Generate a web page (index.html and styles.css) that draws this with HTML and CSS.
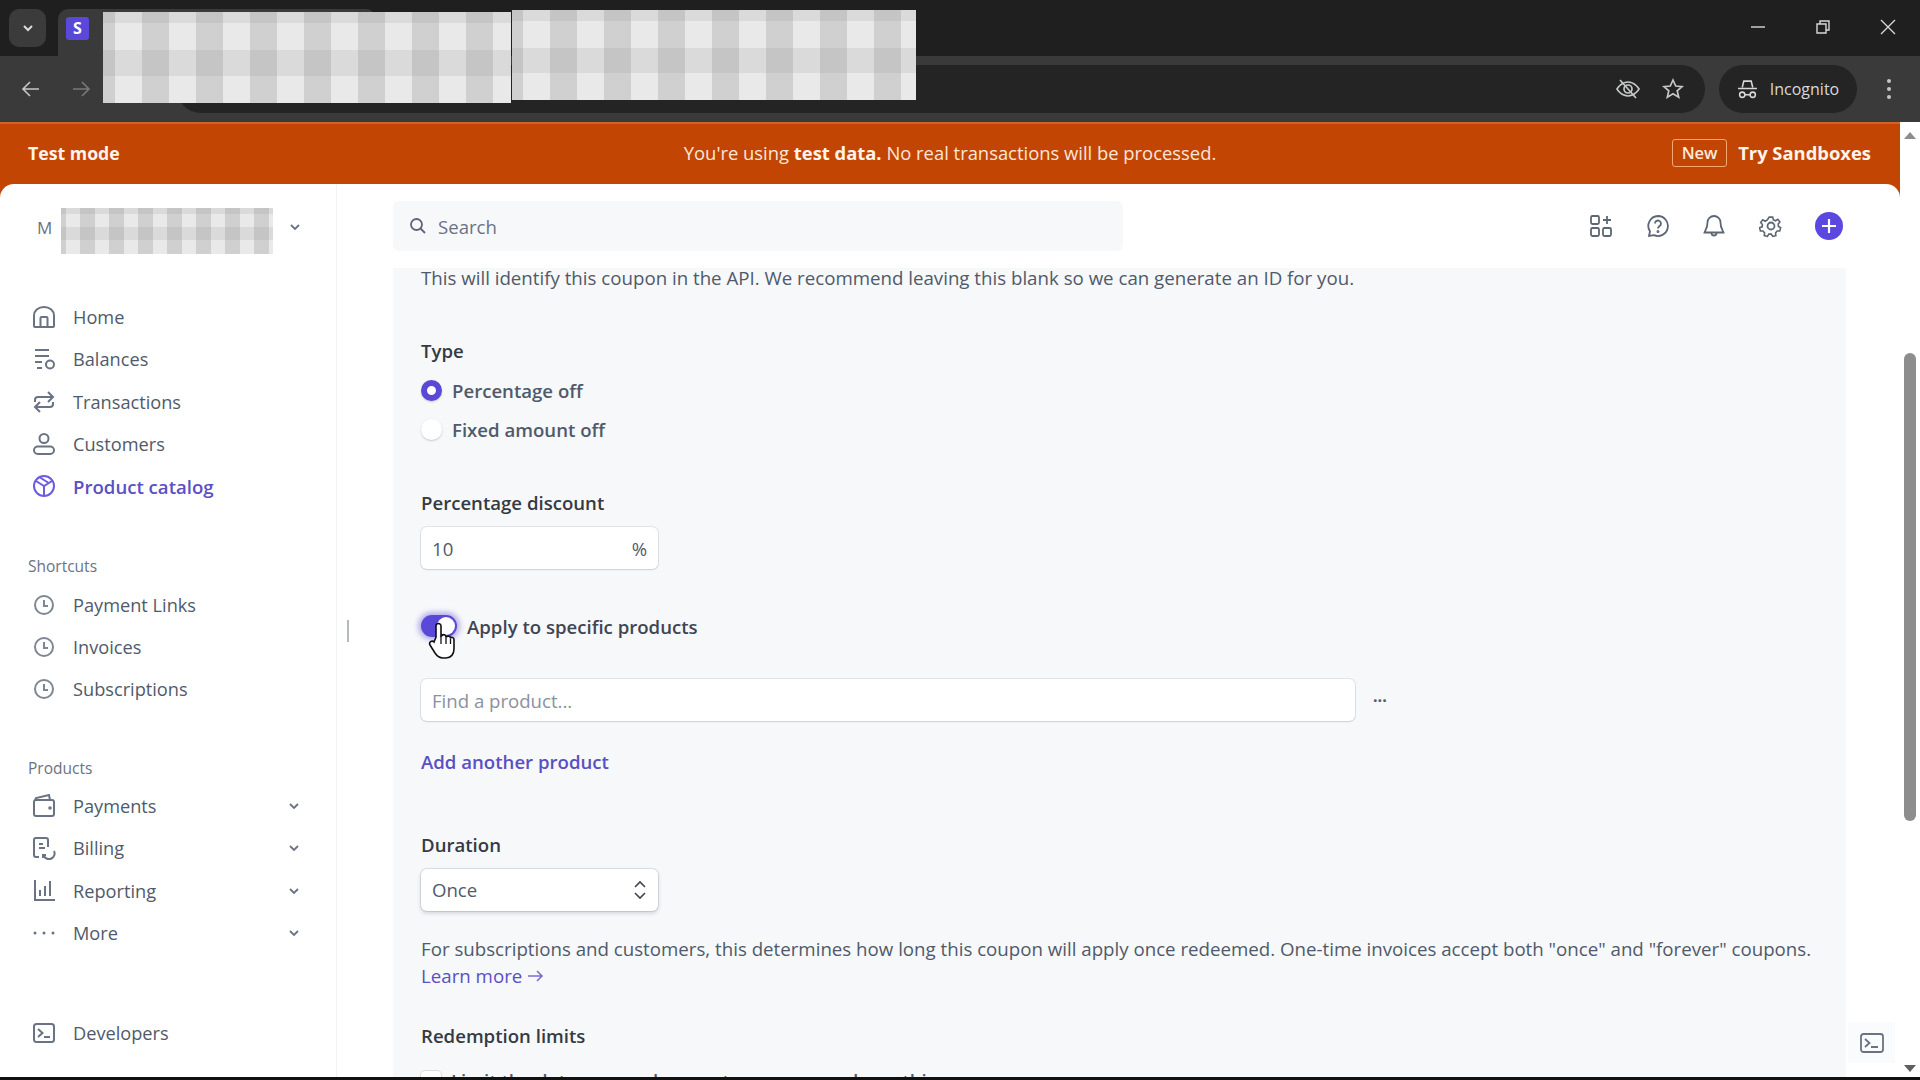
FILE: index.html
```html
<!DOCTYPE html>
<html lang="en">
<head>
    <meta charset="UTF-8">
    <meta name="viewport" content="width=device-width, initial-scale=1.0">
    <title>Create a coupon</title>
    <link rel="stylesheet" href="styles.css">
</head>
<body>

<div class="window">
    <!-- Browser chrome -->
    <div class="tabstrip">
        <div class="tab-search">
            <svg width="14" height="14" viewBox="0 0 14 14" fill="none" stroke="#dcdcdc" stroke-width="2"><path d="M3 5l4 4 4-4"/></svg>
        </div>
        <div class="tab">
            <span class="favicon">S</span>
        </div>
        <div class="window-buttons">
            <svg width="16" height="16" viewBox="0 0 16 16" fill="none" stroke="#d8d8d8" stroke-width="1.4"><path d="M1 8h14"/></svg>
            <svg width="16" height="16" viewBox="0 0 16 16" fill="none" stroke="#d8d8d8" stroke-width="1.4"><path d="M2 5h9v9H2zM5 5V2h9v9h-3"/></svg>
            <svg width="16" height="16" viewBox="0 0 16 16" fill="none" stroke="#d8d8d8" stroke-width="1.4"><path d="M1 1l14 14M15 1L1 15"/></svg>
        </div>
    </div>
    <div class="toolbar">
        <svg class="nav-arrow" width="20" height="20" viewBox="0 0 20 20" fill="none" stroke="#c4c7c5" stroke-width="1.6"><path d="M18 10H3M9 3l-7 7 7 7"/></svg>
        <svg class="nav-arrow" width="20" height="20" viewBox="0 0 20 20" fill="none" stroke="#77797a" stroke-width="1.6"><path d="M2 10h15M11 3l7 7-7 7"/></svg>
        <div class="omnibox">
            <svg width="26" height="26" viewBox="0 0 26 26" fill="none" stroke="#c4c7c5" stroke-width="1.7"><path d="M2 13s4-7 11-7 11 7 11 7-4 7-11 7S2 13 2 13z"/><circle cx="13" cy="13" r="4"/><path d="M5 4l16 18"/></svg>
            <svg width="24" height="24" viewBox="0 0 24 24" fill="none" stroke="#c4c7c5" stroke-width="1.7"><path d="M12 3l2.7 6 6.3.6-4.8 4.2 1.5 6.4L12 16.8l-5.7 3.4 1.5-6.4L3 9.6 9.3 9z"/></svg>
        </div>
        <div class="incognito">
            <svg width="21" height="21" viewBox="0 0 20 20" fill="none" stroke="#d8d8d8" stroke-width="1.5"><path d="M5 8l1.5-6h7L15 8M1 9h18"/><circle cx="5" cy="15" r="2.5"/><circle cx="15" cy="15" r="2.5"/><path d="M7.5 15h5"/></svg>
            <span>Incognito</span>
        </div>
        <svg class="kebab" width="6" height="22" viewBox="0 0 6 22" fill="#c4c7c5"><circle cx="3" cy="3" r="2"/><circle cx="3" cy="11" r="2"/><circle cx="3" cy="19" r="2"/></svg>
    </div>

    <div class="page">
        <div class="page-main">
            <!-- Test mode banner -->
            <div class="banner">
                <strong class="banner-left">Test mode</strong>
                <div class="banner-center">You're using <strong>test data.</strong> No real transactions will be processed.</div>
                <div class="banner-right"><span class="new-badge">New</span><strong>Try Sandboxes</strong></div>
            </div>

            <div class="app">
                <aside class="sidebar">
                    <div class="account">
                        <span class="account-letter">M</span>
                        <span class="checker account-name"></span>
                        <svg class="chevron" width="12" height="12" viewBox="0 0 12 12" fill="none" stroke="#6a7383" stroke-width="1.8"><path d="M2 4l4 4 4-4"/></svg>
                    </div>

                    <nav class="nav-group nav-main">
                        <a class="nav-item">
                            <svg class="nav-icon" viewBox="0 0 24 24"><path d="M2 21V10.5C2 6 6 2 12 2s10 4 10 8.5V21a1 1 0 0 1-1 1H3a1 1 0 0 1-1-1z"/><path d="M8.5 22v-9a1 1 0 0 1 1-1h5a1 1 0 0 1 1 1v9"/></svg>
                            Home
                        </a>
                        <a class="nav-item">
                            <svg class="nav-icon" viewBox="0 0 24 24"><path d="M3 3h14M3 9h14M3 15h7M5 21h5"/><circle cx="18" cy="17.5" r="4"/></svg>
                            Balances
                        </a>
                        <a class="nav-item">
                            <svg class="nav-icon" viewBox="0 0 24 24"><path d="M3 12V10a3 3 0 0 1 3-3h15M16 2l5 5-5 5M21 12v2a3 3 0 0 1-3 3H3M8 12l-5 5 5 5"/></svg>
                            Transactions
                        </a>
                        <a class="nav-item">
                            <svg class="nav-icon" viewBox="0 0 24 24"><circle cx="12" cy="6.5" r="4.5"/><rect x="2" y="14.5" width="20" height="7.5" rx="3.7"/></svg>
                            Customers
                        </a>
                        <a class="nav-item active">
                            <svg class="nav-icon" viewBox="0 0 24 24"><circle cx="12" cy="12" r="10"/><path d="M4 7l8 5 8-5M12 12v10M8 3.500l8 5"/></svg>
                            Product catalog
                        </a>
                    </nav>

                    <div class="nav-group nav-shortcuts">
                        <div class="nav-title">Shortcuts</div>
                        <a class="nav-item">
                            <svg class="nav-icon clock" viewBox="0 0 24 24"><circle cx="12" cy="12" r="9"/><path d="M12 7v6h4"/></svg>
                            Payment Links
                        </a>
                        <a class="nav-item">
                            <svg class="nav-icon clock" viewBox="0 0 24 24"><circle cx="12" cy="12" r="9"/><path d="M12 7v6h4"/></svg>
                            Invoices
                        </a>
                        <a class="nav-item">
                            <svg class="nav-icon clock" viewBox="0 0 24 24"><circle cx="12" cy="12" r="9"/><path d="M12 7v6h4"/></svg>
                            Subscriptions
                        </a>
                    </div>

                    <div class="nav-group nav-products">
                        <div class="nav-title">Products</div>
                        <a class="nav-item">
                            <svg class="nav-icon" viewBox="0 0 24 24"><rect x="2" y="6" width="20" height="16" rx="2"/><path d="M3 6l1-2 13-3 1 5"/><circle cx="18" cy="14" r=".8"/></svg>
                            Payments
                            <svg class="chevron" width="12" height="12" viewBox="0 0 12 12" fill="none" stroke="#6a7383" stroke-width="1.8"><path d="M2 4l4 4 4-4"/></svg>
                        </a>
                        <a class="nav-item">
                            <svg class="nav-icon" viewBox="0 0 24 24"><path d="M7 21H4a2 2 0 0 1-2-2V4a2 2 0 0 1 2-2h10a2 2 0 0 1 2 2v7"/><path d="M7 8h4M7 12h6"/><path d="M22 15a5.5 5.5 0 0 1-10 5M11 22v-3h3"/></svg>
                            Billing
                            <svg class="chevron" width="12" height="12" viewBox="0 0 12 12" fill="none" stroke="#6a7383" stroke-width="1.8"><path d="M2 4l4 4 4-4"/></svg>
                        </a>
                        <a class="nav-item">
                            <svg class="nav-icon" viewBox="0 0 24 24"><path d="M3 1v20h20M8 11v6M13 7v10M18 2v15"/></svg>
                            Reporting
                            <svg class="chevron" width="12" height="12" viewBox="0 0 12 12" fill="none" stroke="#6a7383" stroke-width="1.8"><path d="M2 4l4 4 4-4"/></svg>
                        </a>
                        <a class="nav-item">
                            <svg class="nav-icon dots" viewBox="0 0 24 24"><circle cx="3" cy="12" r="1.5"/><circle cx="12" cy="12" r="1.5"/><circle cx="21" cy="12" r="1.5"/></svg>
                            More
                            <svg class="chevron" width="12" height="12" viewBox="0 0 12 12" fill="none" stroke="#6a7383" stroke-width="1.8"><path d="M2 4l4 4 4-4"/></svg>
                        </a>
                    </div>

                    <a class="nav-item nav-dev">
                        <svg class="nav-icon" viewBox="0 0 24 24"><rect x="2" y="3" width="20" height="18" rx="2.5"/><path d="M6 8l4.5 4L6 16M12 16h6"/></svg>
                        Developers
                    </a>

                    <div class="resize-handle"></div>
                </aside>

                <main class="main">
                    <header class="topbar">
                        <div class="search">
                            <svg width="18" height="18" viewBox="0 0 18 18" fill="none" stroke="#5c6675" stroke-width="1.8"><circle cx="7.5" cy="7.5" r="5.5"/><path d="M11.5 11.5L16 16"/></svg>
                            <span>Search</span>
                        </div>
                        <div class="top-icons">
                            <svg width="24" height="24" viewBox="0 0 24 24" fill="none" stroke="#5c6675" stroke-width="1.8"><rect x="2" y="2" width="8" height="8" rx="1.5"/><rect x="2" y="14" width="8" height="8" rx="1.5"/><rect x="14" y="14" width="8" height="8" rx="1.5"/><path d="M18 2v8M14 6h8"/></svg>
                            <svg width="24" height="24" viewBox="0 0 24 24" fill="none" stroke="#5c6675" stroke-width="1.8"><path d="M12 2a10 10 0 1 1-4 19.2L3 22l1-4.5A10 10 0 0 1 12 2z"/><path d="M9 9.5a3 3 0 1 1 4.5 2.6c-1 .6-1.5 1.2-1.5 2.400"/><circle cx="12" cy="17.5" r=".6"/></svg>
                            <svg width="24" height="24" viewBox="0 0 24 24" fill="none" stroke="#5c6675" stroke-width="1.8"><path d="M12 2a6.5 6.5 0 0 0-6.5 6.5c0 6-2.5 8-3 10h19c-.5-2-3-4-3-10A6.5 6.5 0 0 0 12 2z"/><path d="M9.5 19a2.5 2.5 0 0 0 5 0"/></svg>
                            <svg width="24" height="24" viewBox="0 0 24 24" fill="none" stroke="#5c6675" stroke-width="1.8"><circle cx="12" cy="12" r="3.5"/><path d="M10 2h4l.6 3 2.5 1.1 2.7-1.6 2.4 3-2 2.3.3 2.7 2.5 1.5-1 3.7-3 .1-1.800 2.100.4 3-3.600 1-1.600-2.600h-2.800l-1.600 2.600-3.600-1 .4-3-1.800-2.100-3-.1-1-3.700L2 13l.3-2.700-2-2.300 2.400-3 2.700 1.600L7.900 5z" transform="translate(1.4 1.4) scale(.88)"/></svg>
                            <span class="plus-button">
                                <svg width="16" height="16" viewBox="0 0 16 16" fill="none" stroke="#fff" stroke-width="2.2"><path d="M8 1v14M1 8h14"/></svg>
                            </span>
                        </div>
                    </header>

                    <div class="scroll-area">
                        <div class="form-panel">
                            <p class="hint hint-id">This will identify this coupon in the API. We recommend leaving this blank so we can generate an ID for you.</p>

                            <div class="field field-type">
                                <div class="label">Type</div>
                                <div class="radio-row"><span class="radio checked"></span>Percentage off</div>
                                <div class="radio-row"><span class="radio"></span>Fixed amount off</div>
                            </div>

                            <div class="field field-percent">
                                <div class="label">Percentage discount</div>
                                <div class="input small-input"><span>10</span><span class="suffix">%</span></div>
                            </div>

                            <div class="toggle-row">
                                <span class="toggle"><span class="toggle-knob"></span></span>
                                Apply to specific products
                            </div>

                            <div class="product-row">
                                <div class="input wide-input placeholder">Find a product...</div>
                                <span class="more-dots">···</span>
                            </div>

                            <a class="link add-link">Add another product</a>

                            <div class="field field-duration">
                                <div class="label">Duration</div>
                                <div class="input small-input select">
                                    <span>Once</span>
                                    <svg width="14" height="20" viewBox="0 0 14 20" fill="none" stroke="#414552" stroke-width="1.6"><path d="M2 7l5-5 5 5M2 13l5 5 5-5"/></svg>
                                </div>
                            </div>

                            <p class="hint hint-duration">For subscriptions and customers, this determines how long this coupon will apply once redeemed. One-time invoices accept both "once" and "forever" coupons.<br>
                                <a class="link learn-link">Learn more
                                    <svg width="17" height="14" viewBox="0 0 17 14" fill="none" stroke="#7a6fd0" stroke-width="1.6"><path d="M1 7h14M10 2l5 5-5 5"/></svg>
                                </a>
                            </p>

                            <div class="label label-limits">Redemption limits</div>
                            <div class="check-row"><span class="checkbox"></span>Limit the date range when customers can redeem this coupon</div>
                        </div>
                        <div class="console-button">
                            <svg width="24" height="20" viewBox="0 0 24 20" fill="none" stroke="#6a7383" stroke-width="1.8"><rect x="1" y="1" width="22" height="18" rx="2.5"/><path d="M5 6l4.5 4L5 14M11 14h7"/></svg>
                        </div>
                    </div>
                </main>
            </div>
        </div>

        <!-- Scrollbar of the window -->
        <div class="scrollbar">
            <span class="scroll-arrow up"></span>
            <div class="scroll-track"><div class="scroll-thumb"></div></div>
            <span class="scroll-arrow down"></span>
        </div>
    </div>
    <div class="bottom-edge"></div>

    <!-- Blurred-out tab titles lie over the chrome -->
    <div class="checker blot-one"></div>
    <div class="checker blot-two"></div>
    <svg class="hand-cursor" width="28" height="38" viewBox="0 0 28 38">
        <path d="M8 15V4a2.5 2.5 0 0 1 5 0v10l1-.5a2.3 2.3 0 0 1 4 1l1 0a2.3 2.3 0 0 1 3.5 1.2 2.3 2.3 0 0 1 3.5 2V27c0 5-3 9-8 9h-3c-4 0-6-2-8-5l-5-8c-1.5-3 2-5 4-3z" fill="#fff" stroke="#111" stroke-width="1.6"/>
        <path d="M13 14v8M18 15v7M22.5 17v5" stroke="#111" stroke-width="1.3" fill="none"/>
    </svg>
</div>

</body>
</html>
```

FILE: styles.css
```css
* {
    box-sizing: border-box;
}
html, body {
    margin: 0;
    padding: 0;
    height: 100%;
    overflow: hidden;
}
body {
    font-family: "Open Sans", "Noto Sans", Arial, sans-serif;
    font-size: 18.6px;
    color: #414552;
    background: #000;
}
.window {
    position: relative;
    width: 1920px;
    height: 1080px;
    display: flex;
    flex-direction: column;
}

/* browser chrome */
.tabstrip {
    height: 56px;
    flex: none;
    background: #1f1f1f;
    display: flex;
    align-items: flex-start;
    padding: 9px 0 0 9px;
}
.tab-search {
    width: 37px;
    height: 38px;
    border-radius: 10px;
    background: #3b3b3b;
    display: flex;
    align-items: center;
    justify-content: center;
}
.tab {
    margin-left: 12px;
    width: 318px;
    height: 47px;
    padding: 8px 0 0 8px;
    background: #3a3a3a;
    border-radius: 10px 10px 0 0;
}
.favicon {
    display: block;
    width: 23px;
    height: 23px;
    border-radius: 3px;
    background: #5a48d8;
    color: #fff;
    font-weight: 700;
    font-size: 16px;
    line-height: 23px;
    text-align: center;
}
.window-buttons {
    margin-left: auto;
    height: 36px;
    display: flex;
    align-items: center;
    gap: 49px;
    padding-right: 24px;
}
.toolbar {
    height: 66px;
    flex: none;
    background: #3a3a3a;
    display: flex;
    align-items: center;
    padding: 0 28px 0 21px;
    gap: 30px;
}
.nav-arrow {
    flex: none;
}
.omnibox {
    margin-left: 56px;
    flex: 1;
    height: 48px;
    background: #242424;
    border-radius: 24px;
    display: flex;
    align-items: center;
    justify-content: flex-end;
    gap: 20px;
    padding-right: 20px;
}
.incognito {
    margin-left: -16px;
    height: 48px;
    width: 138px;
    background: #242424;
    border-radius: 24px;
    color: #d8d8d8;
    font-size: 16px;
    display: flex;
    align-items: center;
    justify-content: center;
    gap: 12px;
}
.kebab {
    margin-left: -1px;
}

/* page */
.page {
    flex: 1;
    min-height: 0;
    display: flex;
}
.page-main {
    flex: 1;
    min-width: 0;
    background: #c24504;
    display: flex;
    flex-direction: column;
}
.banner {
    height: 62px;
    flex: none;
    display: flex;
    align-items: center;
    justify-content: space-between;
    padding: 0 29px 3px 28px;
    color: #fbe7da;
    font-size: 18.4px;
    border-top: 2px solid #d2612a;
    position: relative;
}
.banner strong {
    font-weight: 700;
    color: #fff3ea;
}
.banner-left {
    font-size: 17.7px;
}
.banner-center {
    position: absolute;
    left: 0;
    width: 1900px;
    text-align: center;
}
.banner-right {
    display: flex;
    align-items: center;
    gap: 11px;
}
.new-badge {
    width: 55px;
    height: 28px;
    border: 1.5px solid #f3a873;
    border-radius: 3px;
    line-height: 25px;
    text-align: center;
    font-size: 16.5px;
    font-weight: 600;
    color: #ffe9da;
}
.app {
    flex: 1;
    min-height: 0;
    background: #fff;
    border-radius: 14px 14px 0 0;
    display: flex;
    overflow: hidden;
}

/* sidebar */
.sidebar {
    position: relative;
    width: 337px;
    flex: none;
    border-right: 1px solid #f1f2f4;
    padding: 24px 0 0 28px;
    display: flex;
    flex-direction: column;
    font-size: 18.2px;
}
.account {
    height: 46px;
    display: flex;
    align-items: center;
    color: #6a7383;
    font-size: 17px;
    padding-left: 9px;
}
.account-letter {
    width: 24px;
    margin-bottom: 8px;
}
.account .chevron {
    margin-left: 16px;
    margin-bottom: 8px;
}
.nav-group {
    display: flex;
    flex-direction: column;
}
.nav-main {
    margin-top: 42px;
}
.nav-shortcuts {
    margin-top: 45px;
}
.nav-products {
    margin-top: 43px;
}
.nav-title {
    font-size: 15.5px;
    color: #6a7383;
    height: 28px;
    line-height: 28px;
    margin-bottom: 3.5px;
}
.nav-item {
    height: 42.25px;
    display: flex;
    align-items: center;
    gap: 17px;
    padding-left: 4px;
    padding-right: 36px;
    color: #505a6a;
}
.nav-item .chevron {
    margin-left: auto;
}
.nav-item.active {
    color: #5a4fc4;
    font-weight: 600;
    font-size: 18.6px;
}
.nav-icon {
    width: 24px;
    height: 24px;
    flex: none;
    fill: none;
    stroke: #6a7383;
    stroke-width: 2;
}
.active .nav-icon {
    stroke: #6c5ce0;
}
.nav-icon.dots {
    fill: #6a7383;
    stroke: none;
}
.nav-icon.clock {
    stroke: #7f8794;
}
.nav-dev {
    margin-top: 58px;
}
.resize-handle {
    position: absolute;
    left: 347px;
    top: 436px;
    width: 2px;
    height: 22px;
    background: #b5b8bd;
}

/* main */
.main {
    flex: 1;
    min-width: 0;
    display: flex;
    flex-direction: column;
    padding-left: 56px;
}
.topbar {
    height: 81px;
    flex: none;
    display: flex;
    align-items: center;
    padding: 3px 57px 0 0;
}
.search {
    width: 730px;
    height: 50px;
    background: #f6f8fa;
    border-radius: 6px;
    display: flex;
    align-items: center;
    gap: 11px;
    padding-left: 16px;
    color: #6a7383;
}
.top-icons {
    margin-left: auto;
    display: flex;
    align-items: center;
    gap: 32.5px;
}
.plus-button {
    width: 28px;
    height: 28px;
    border-radius: 50%;
    background: #5a48e0;
    display: flex;
    align-items: center;
    justify-content: center;
}
.scroll-area {
    position: relative;
    flex: 1;
    min-height: 0;
    overflow: hidden;
    padding-right: 54px;
}
.form-panel {
    background: #f6f8fa;
    margin-top: 3px;
    padding: 0 28px;
    height: 1000px;
}
.hint {
    margin: 0;
    line-height: 27px;
    font-size: 18.7px;
    color: #505a6a;
}
.hint-id {
    line-height: 20px;
}
.label {
    font-weight: 600;
    color: #353a44;
    line-height: 28px;
}
.field-type {
    margin-top: 48.5px;
}
.field-type .label {
    margin-bottom: 6px;
}
.radio-row {
    height: 39.5px;
    display: flex;
    align-items: center;
    gap: 10px;
    font-weight: 600;
    color: #505a6a;
}
.radio {
    width: 21px;
    height: 21px;
    border-radius: 50%;
    background: #fff;
    box-shadow: 0 1px 2px rgba(60, 66, 87, 0.25);
}
.radio.checked {
    background: #fff;
    border: 6px solid #5a48d8;
}
.field-percent {
    margin-top: 39.5px;
}
.input {
    height: 42px;
    background: #fff;
    border-radius: 6px;
    box-shadow: 0 0 0 1px rgba(60, 66, 87, 0.1), 0 1px 2px rgba(60, 66, 87, 0.12);
    display: flex;
    align-items: center;
    justify-content: space-between;
    padding: 0 11px;
    color: #505a6a;
}
.small-input {
    width: 237px;
    margin-top: 10px;
}
.placeholder {
    color: #8a919e;
}
.toggle-row {
    margin-top: 37px;
    height: 40px;
    display: flex;
    align-items: center;
    gap: 10px;
    font-weight: 600;
    color: #414552;
}
.toggle {
    width: 36px;
    height: 22px;
    border-radius: 11px;
    background: #5a48d8;
    box-shadow: 0 0 5px 3px rgba(90, 72, 216, 0.4);
    position: relative;
}
.toggle-knob {
    position: absolute;
    right: 2px;
    top: 2px;
    width: 18px;
    height: 18px;
    border-radius: 50%;
    background: #fff;
}
.product-row {
    margin-top: 33px;
    display: flex;
    align-items: center;
}
.wide-input {
    width: 934px;
}
.more-dots {
    margin-left: 18px;
    font-weight: 700;
    font-size: 16px;
    color: #505a6a;
}
.link {
    color: #5a4fc4;
    font-weight: 600;
}
.add-link {
    display: block;
    margin-top: 26.5px;
    line-height: 28px;
}
.field-duration {
    margin-top: 55px;
}
.select {
    font-weight: 500;
    box-shadow: 0 0 0 1px rgba(60, 66, 87, 0.12), 0 2px 4px rgba(60, 66, 87, 0.22);
}
.hint-duration {
    margin-top: 24px;
}
.learn-link {
    font-weight: 500;
}
.label-limits {
    margin-top: 33.5px;
}
.check-row {
    margin-top: 18px;
    display: flex;
    align-items: center;
    gap: 10px;
    color: #505a6a;
    font-weight: 600;
}
.checkbox {
    width: 20px;
    height: 20px;
    border-radius: 4px;
    background: #fff;
    box-shadow: 0 0 0 1px rgba(60, 66, 87, 0.15);
}
.console-button {
    position: absolute;
    right: 5px;
    bottom: 14px;
    width: 47px;
    height: 41px;
    background: #fafbfc;
    display: flex;
    align-items: center;
    justify-content: center;
}

/* window scrollbar */
.scrollbar {
    width: 20px;
    flex: none;
    background: #fff;
    display: flex;
    flex-direction: column;
    align-items: center;
    padding: 10px 0 5px;
}
.scroll-track {
    flex: 1;
    width: 100%;
    padding-top: 214px;
}
.scroll-thumb {
    width: 12px;
    height: 468px;
    margin-left: 4px;
    border-radius: 6px;
    background: #8d8d8d;
}
.scroll-arrow {
    width: 0;
    height: 0;
    border-left: 6px solid transparent;
    border-right: 6px solid transparent;
}
.scroll-arrow.up {
    border-bottom: 7px solid #8d8d8d;
}
.scroll-arrow.down {
    border-top: 7px solid #5f5f5f;
}
.bottom-edge {
    height: 3px;
    flex: none;
    background: #111;
}

/* blurred redactions */
.checker {
    background-color: #e9e9e9;
    background-image:
        linear-gradient(90deg, transparent 50%, rgba(128, 128, 128, 0.24) 50%),
        linear-gradient(180deg, rgba(128, 128, 128, 0.14) 0 12%, transparent 12% 42%, rgba(128, 128, 128, 0.14) 42% 70%, transparent 70%);
    background-size: 54px 100%, 100% 100%;
}
.account-name {
    width: 212px;
    height: 46px;
    background-size: 29px 100%, 100% 100%;
    background-position: 5px 0, 0 0;
}
.blot-one {
    position: absolute;
    left: 103px;
    top: 12px;
    width: 408px;
    height: 91px;
    background-position: -42px 0, 0 0;
}
.blot-two {
    position: absolute;
    left: 512px;
    top: 10px;
    width: 404px;
    height: 90px;
    background-position: 11px 0, 0 0;
}
.hand-cursor {
    position: absolute;
    left: 428px;
    top: 622px;
}
```
